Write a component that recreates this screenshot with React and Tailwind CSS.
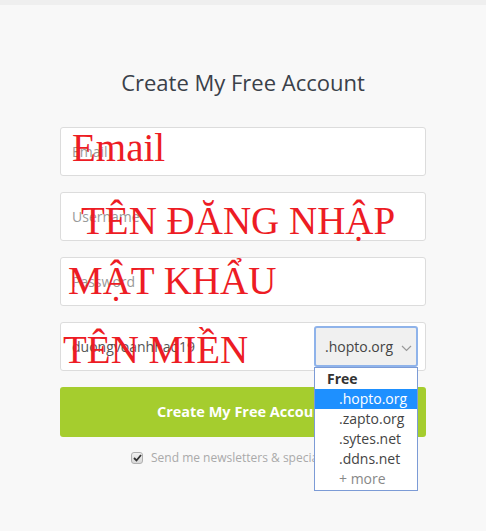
import React from 'react';

const red = 'absolute whitespace-nowrap text-[39px] leading-none text-[#ed1c24] pointer-events-none';
const serif = { fontFamily: '"Liberation Serif", "Times New Roman", serif' };

function Field({ placeholder, value, children }) {
  return (
    <div className="relative h-[49px] rounded-[3px] border border-[#dcdcdc] bg-white flex items-center pl-[11px]">
      {value ? (
        <span className="text-[14px] text-[#555]">{value}</span>
      ) : (
        <span className="text-[14px] text-[#999]">{placeholder}</span>
      )}
      {children}
    </div>
  );
}

export default function App() {
  const domains = ['.hopto.org', '.zapto.org', '.sytes.net', '.ddns.net'];

  return (
    <div
      className="min-h-screen bg-[#f8f8f8] text-[#3a4049]"
      style={{ fontFamily: '"Open Sans", "Liberation Sans", sans-serif' }}
    >
      <div className="h-[5px] bg-[#efefef]" />

      <div className="w-[366px] mx-auto pt-[62px]">
        <h1 className="text-center text-[22px] leading-[30px] text-[#3a4049] mb-[30px]">
          Create My Free Account
        </h1>

        <div className="flex flex-col gap-[16px]">
          <Field placeholder="Email">
            <span className={red} style={{ ...serif, top: 0, left: 11 }}>Email</span>
          </Field>
          <Field placeholder="Username">
            <span className={red} style={{ ...serif, top: 8, left: 20 }}>TÊN ĐĂNG NHẬP</span>
          </Field>
          <Field placeholder="Password">
            <span className={red} style={{ ...serif, top: 3, left: 7 }}>MẬT KHẨU</span>
          </Field>
          <Field value="duongvoanhhao19">
            {/* domain select, shown open */}
            <div className="absolute right-[7px] top-[3px] w-[104px] h-[41px] rounded-[3px] border-2 border-[#8fb3ea] bg-[#f0f0f0] flex items-center pl-[9px] text-[14px] text-[#444]">
              .hopto.org
              <svg className="ml-[8px] mt-[3px]" width="11" height="7" viewBox="0 0 11 7" fill="none" stroke="#999" strokeWidth="1.2">
                <path d="M1 1l4.5 4.5L10 1" />
              </svg>
            </div>
            <div className="absolute z-20 right-[7px] top-[44px] w-[104px] border border-[#7c9bd6] bg-white text-[14px] leading-[20px] py-[1px]">
              <div className="pl-[12px] font-bold text-[#333] h-[20px]">Free</div>
              {domains.map((d, i) => (
                <div
                  key={d}
                  className={`pl-[24px] h-[20px] ${i === 0 ? 'bg-[#1e90ff] text-white' : 'text-[#444]'}`}
                >
                  {d}
                </div>
              ))}
              <div className="pl-[24px] h-[20px] text-[#888]">+ more</div>
            </div>
            <span className={red} style={{ ...serif, top: 7, left: 2 }}>TÊN MIỀN</span>
          </Field>

          <button className="h-[50px] rounded-[3px] bg-[#a5cd2e] text-white font-bold text-[14.5px]">
            Create My Free Account
          </button>
        </div>

        <div className="flex items-center pl-[71px] mt-[12px] text-[12px] text-[#aaa]">
          <span className="w-[12px] h-[12px] rounded-[3px] border border-[#b0b0b0] bg-gradient-to-b from-[#f2f2f2] to-[#d8d8d8] flex items-center justify-center mr-[8px]">
            <svg width="9" height="8" viewBox="0 0 9 8" fill="none" stroke="#333" strokeWidth="1.8">
              <path d="M1 4l2.5 2.5L8 1" />
            </svg>
          </span>
          Send me newsletters &amp; special offers
        </div>
      </div>
    </div>
  );
}
